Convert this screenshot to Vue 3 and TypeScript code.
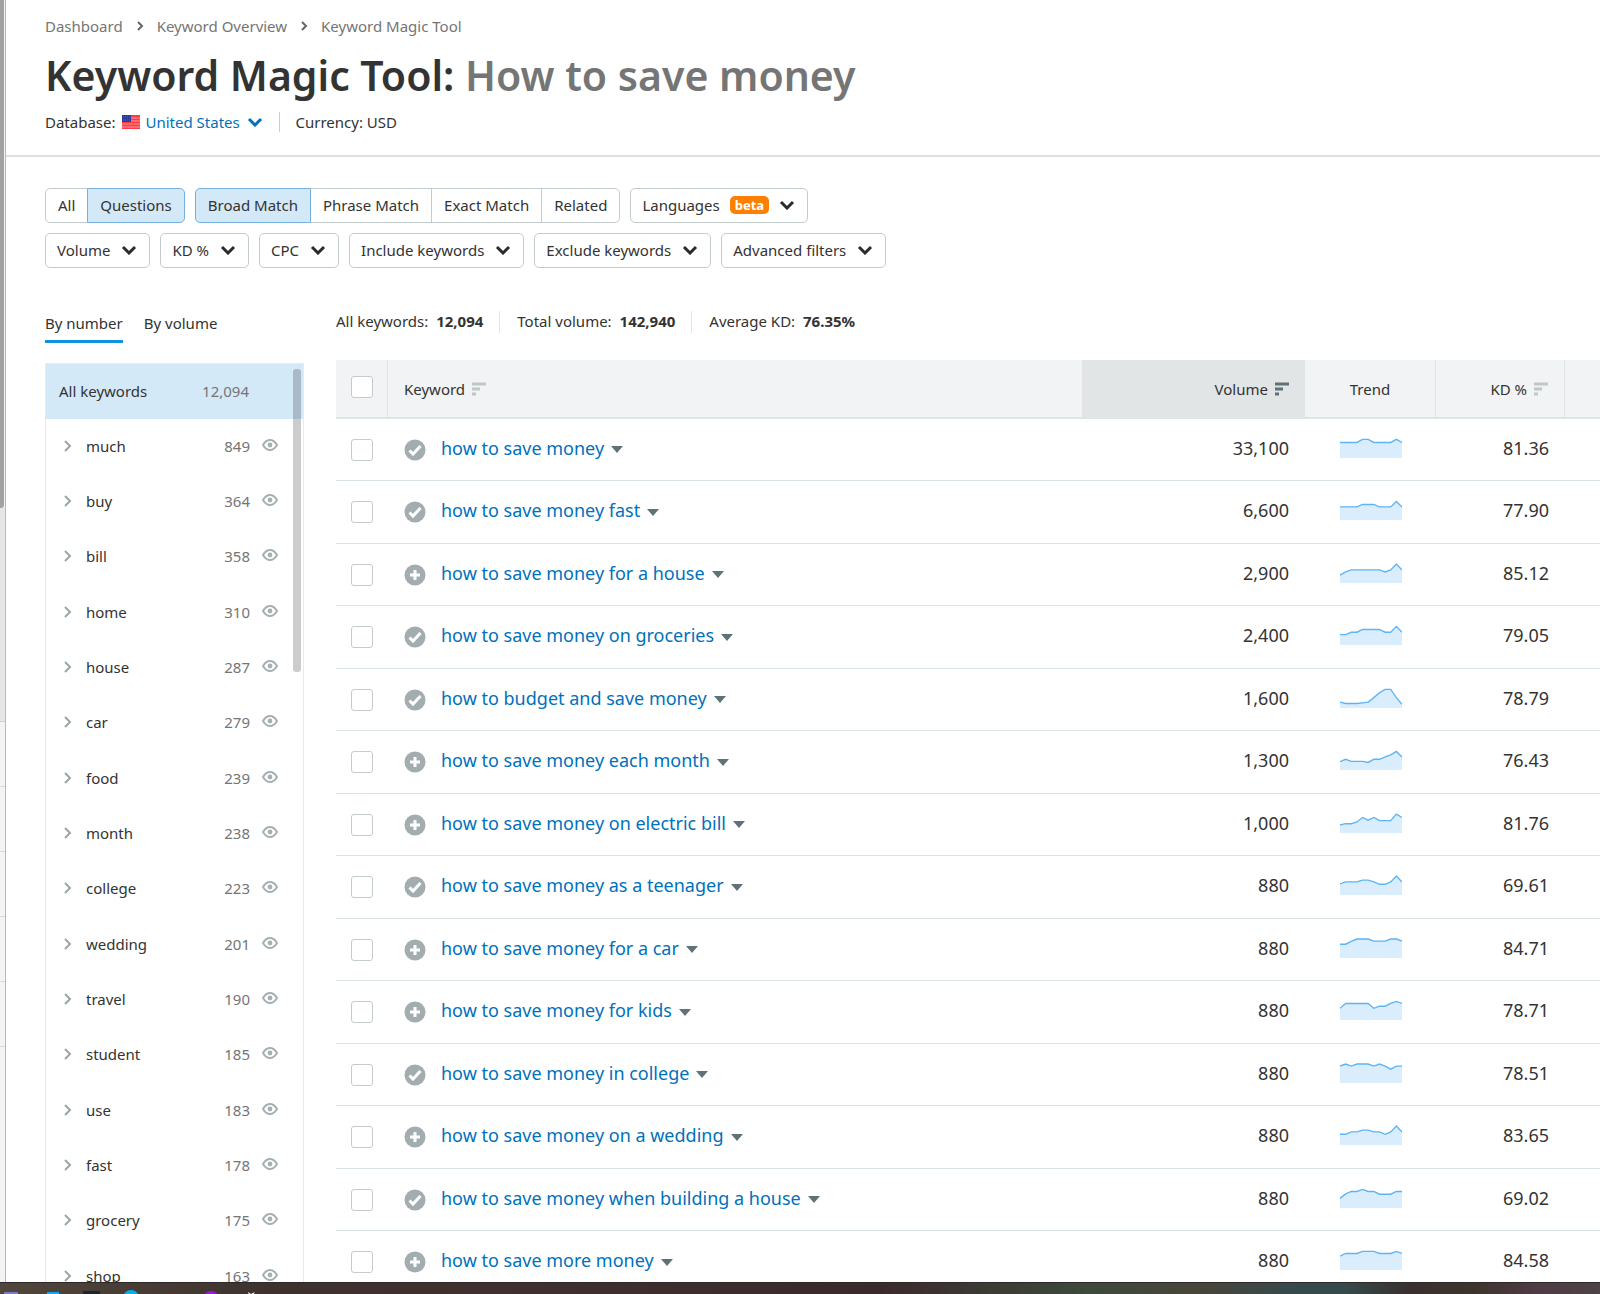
<script setup lang="ts">
import { computed, ref } from 'vue'

interface Group { name: string; count: string }
interface Keyword { text: string; added: boolean; volume: string; kd: string; trend: number[] }

const matchModes = ['Broad Match', 'Phrase Match', 'Exact Match', 'Related']
const scopes = ['All', 'Questions']
const menus = ['Volume', 'KD %', 'CPC', 'Include keywords', 'Exclude keywords', 'Advanced filters']
const match = ref('Broad Match')
const scope = ref('Questions')
const grouping = ref('By number')
const database = ref('us')

const groups: Group[] = [
  { name: 'much', count: '849' },
  { name: 'buy', count: '364' },
  { name: 'bill', count: '358' },
  { name: 'home', count: '310' },
  { name: 'house', count: '287' },
  { name: 'car', count: '279' },
  { name: 'food', count: '239' },
  { name: 'month', count: '238' },
  { name: 'college', count: '223' },
  { name: 'wedding', count: '201' },
  { name: 'travel', count: '190' },
  { name: 'student', count: '185' },
  { name: 'use', count: '183' },
  { name: 'fast', count: '178' },
  { name: 'grocery', count: '175' },
  { name: 'shop', count: '163' },
]

const keywords: Keyword[] = [
  { text: 'how to save money', added: true, volume: '33,100', kd: '81.36', trend: [45, 45, 45, 45, 54, 54, 45, 45, 45, 45, 54, 45] },
  { text: 'how to save money fast', added: true, volume: '6,600', kd: '77.90', trend: [38, 38, 38, 38, 45, 45, 45, 38, 38, 38, 54, 38] },
  { text: 'how to save money for a house', added: false, volume: '2,900', kd: '85.12', trend: [23, 32, 38, 38, 38, 38, 38, 38, 32, 38, 55, 38] },
  { text: 'how to save money on groceries', added: true, volume: '2,400', kd: '79.05', trend: [30, 30, 37, 37, 45, 45, 45, 45, 37, 37, 54, 37] },
  { text: 'how to budget and save money', added: true, volume: '1,600', kd: '78.79', trend: [17, 13, 13, 13, 15, 17, 30, 44, 54, 54, 30, 11] },
  { text: 'how to save money each month', added: false, volume: '1,300', kd: '76.43', trend: [24, 31, 25, 25, 25, 22, 31, 31, 38, 44, 54, 38] },
  { text: 'how to save money on electric bill', added: false, volume: '1,000', kd: '81.76', trend: [23, 27, 27, 32, 45, 37, 45, 36, 36, 36, 55, 45] },
  { text: 'how to save money as a teenager', added: true, volume: '880', kd: '69.61', trend: [32, 38, 38, 38, 43, 43, 38, 31, 31, 38, 55, 38] },
  { text: 'how to save money for a car', added: false, volume: '880', kd: '84.71', trend: [40, 40, 48, 55, 55, 55, 49, 49, 49, 55, 55, 49] },
  { text: 'how to save money for kids', added: false, volume: '880', kd: '78.71', trend: [34, 48, 48, 48, 48, 48, 34, 40, 40, 48, 54, 48] },
  { text: 'how to save money in college', added: true, volume: '880', kd: '78.51', trend: [49, 55, 49, 55, 55, 55, 49, 55, 49, 40, 49, 49] },
  { text: 'how to save money on a wedding', added: false, volume: '880', kd: '83.65', trend: [31, 31, 38, 38, 43, 43, 38, 38, 31, 38, 55, 38] },
  { text: 'how to save money when building a house', added: true, volume: '880', kd: '69.02', trend: [28, 41, 48, 48, 54, 48, 48, 40, 40, 40, 48, 48] },
  { text: 'how to save more money', added: false, volume: '880', kd: '84.58', trend: [40, 48, 48, 48, 54, 54, 54, 48, 48, 48, 54, 48] },
]

// Sparklines are drawn on a 186 by 58 grid, one point a month.
const rows = computed(() =>
  keywords.map((k) => {
    const line = k.trend.map((v, i) => `${((i * 186) / 11).toFixed(1)},${58 - v}`).join(' ')
    return { ...k, line, area: `0,58 ${line} 186,58` }
  }),
)
</script>

<template>
  <div class="screen">
    <div class="workspace">
      <div class="behind" aria-hidden="true">
        <div class="behind-thumb"></div>
        <div class="behind-panel"></div>
        <div v-for="n in 5" :key="n" class="behind-row"></div>
      </div>

      <div class="page">
        <header class="top">
          <nav class="crumbs" aria-label="Breadcrumb">
            <a href="#">Dashboard</a>
            <svg width="8" height="12" viewBox="0 0 8 12"><path d="M2 2l4 4-4 4" /></svg>
            <a href="#">Keyword Overview</a>
            <svg width="8" height="12" viewBox="0 0 8 12"><path d="M2 2l4 4-4 4" /></svg>
            <a href="#">Keyword Magic Tool</a>
          </nav>
          <h1>Keyword Magic Tool: <span>How to save money</span></h1>
          <div class="settings">
            <label for="database">Database:</label>
            <svg class="flag" width="18" height="14" viewBox="0 0 18 14">
              <rect width="18" height="14" fill="#ff3b41" />
              <path d="M0 3h18M0 6h18M0 9h18M0 12h18" stroke="#ff9a9c" stroke-width="1" />
              <rect width="9" height="7" fill="#2a3a9c" />
              <path d="M1 2h7M1 5h7" stroke="#5a68b8" stroke-dasharray="1 1" />
            </svg>
            <select id="database" v-model="database">
              <option value="us">United States</option>
            </select>
            <svg class="chev blue" width="16" height="10" viewBox="0 0 16 10"><path d="M2 2l6 6 6-6" /></svg>
            <span class="currency">Currency: <span>USD</span></span>
          </div>
        </header>

        <section class="filters" aria-label="Filters">
          <div class="filter-row">
            <div class="group">
              <button v-for="s in scopes" :key="s" type="button" :class="{ on: scope === s }" @click="scope = s">{{ s }}</button>
            </div>
            <div class="group">
              <button v-for="m in matchModes" :key="m" type="button" :class="{ on: match === m }" @click="match = m">{{ m }}</button>
            </div>
            <button type="button" class="menu languages" aria-haspopup="true">
              Languages <span class="beta">beta</span>
              <svg class="chev" width="16" height="10" viewBox="0 0 16 10"><path d="M2 2l6 6 6-6" /></svg>
            </button>
          </div>
          <div class="filter-row">
            <button v-for="m in menus" :key="m" type="button" class="menu" aria-haspopup="true">
              {{ m }}
              <svg class="chev" width="16" height="10" viewBox="0 0 16 10"><path d="M2 2l6 6 6-6" /></svg>
            </button>
          </div>
        </section>

        <div class="body">
          <aside class="side">
            <div class="tabs">
              <button v-for="t in ['By number', 'By volume']" :key="t" type="button" :class="{ active: grouping === t }" @click="grouping = t">{{ t }}</button>
            </div>
            <div class="list">
              <button type="button" class="all"><span>All keywords</span><span class="count">12,094</span></button>
              <ul>
                <li v-for="g in groups" :key="g.name">
                  <button type="button" class="item">
                    <svg width="8" height="12" viewBox="0 0 8 12"><path d="M1 1l5 5-5 5" /></svg>
                    <span class="name">{{ g.name }}</span>
                    <span class="count">{{ g.count }}</span>
                  </button>
                  <button type="button" class="eye" :aria-label="'Exclude ' + g.name">
                    <svg width="16" height="12" viewBox="0 0 16 12">
                      <path d="M1 6Q4 1 8 1t7 5q-3 5-7 5T1 6z" />
                      <circle cx="8" cy="6" r="2.4" />
                    </svg>
                  </button>
                </li>
              </ul>
              <div class="thumb"></div>
            </div>
          </aside>

          <main class="results">
            <div class="stats">
              <span>All keywords: <b>12,094</b></span>
              <span>Total volume: <b>142,940</b></span>
              <span>Average KD: <b>76.35%</b></span>
            </div>
            <table>
              <colgroup>
                <col class="c-tick" /><col /><col class="c-volume" /><col class="c-trend" /><col class="c-kd" /><col class="c-rest" />
              </colgroup>
              <thead>
                <tr>
                  <th class="tick"><input type="checkbox" aria-label="Select all keywords" /></th>
                  <th class="kw">
                    <button type="button" class="sort">Keyword
                      <svg width="14" height="14" viewBox="0 0 14 14"><path d="M0 2h14M0 7h8M0 12h4" /></svg>
                    </button>
                  </th>
                  <th class="num sorted">
                    <button type="button" class="sort">Volume
                      <svg width="14" height="14" viewBox="0 0 14 14"><path d="M0 2h14M0 7h8M0 12h4" /></svg>
                    </button>
                  </th>
                  <th class="trend">Trend</th>
                  <th class="num kd">
                    <button type="button" class="sort">KD %
                      <svg width="14" height="14" viewBox="0 0 14 14"><path d="M0 2h14M0 7h8M0 12h4" /></svg>
                    </button>
                  </th>
                  <th></th>
                </tr>
              </thead>
              <tbody>
                <tr v-for="r in rows" :key="r.text">
                  <td class="tick"><input type="checkbox" :aria-label="'Select ' + r.text" /></td>
                  <td class="kw">
                    <div class="kw-cell">
                      <svg class="mark" width="22" height="22" viewBox="0 0 22 22">
                        <circle cx="11" cy="11" r="10.5" />
                        <path v-if="r.added" d="M5.5 11.5l3.5 3.5 7.5-8" />
                        <path v-else d="M11 6v10M6 11h10" />
                      </svg>
                      <a href="#">{{ r.text }}</a>
                      <svg class="caret" width="12" height="7" viewBox="0 0 12 7"><path d="M0 0h12L6 7z" /></svg>
                    </div>
                  </td>
                  <td class="num">{{ r.volume }}</td>
                  <td class="trend">
                    <svg width="62" height="20" viewBox="0 0 186 58" preserveAspectRatio="none">
                      <polygon :points="r.area" />
                      <polyline :points="r.line" />
                    </svg>
                  </td>
                  <td class="num">{{ r.kd }}</td>
                  <td></td>
                </tr>
              </tbody>
            </table>
          </main>
        </div>
      </div>
    </div>

    <footer class="taskbar" aria-hidden="true">
      <svg width="260" height="12" viewBox="0 0 260 12">
        <rect x="4" y="9" width="14" height="6" rx="1" fill="#7d7cc4" />
        <path d="M43 12v-1h4V9h12v3z" fill="#18a4f0" />
        <path d="M43 11h8v1h-8z" fill="#0a62b0" />
        <rect x="83" y="8" width="17" height="6" rx="1" fill="#1e252c" />
        <circle cx="131" cy="15" r="8" fill="#06aef0" />
        <path d="M165 10l4 1 6-1-2 2h-6z" fill="#7c2020" />
        <circle cx="211" cy="16" r="8" fill="#a512e0" />
        <path d="M248 9l3 2 4-2-2 3h-4z" fill="#fff" />
      </svg>
    </footer>
  </div>
</template>

<style>
html,
body {
  margin: 0;
  background: #fff;
}
</style>

<style scoped>
.screen {
  display: flex;
  flex-direction: column;
  height: 100vh;
  overflow: hidden;
  font-family: 'Noto Sans', 'Open Sans', sans-serif;
  font-size: 15px;
  line-height: 20px;
  color: #333;
}
.screen * {
  box-sizing: border-box;
}
button,
select {
  margin: 0;
  padding: 0;
  border: 0;
  background: none;
  font: inherit;
  color: inherit;
  cursor: pointer;
}
a {
  color: inherit;
  text-decoration: none;
}
svg {
  display: block;
  flex: none;
}
.workspace {
  flex: 1;
  display: flex;
  min-height: 0;
}

/* edge of the window behind this one */
.behind {
  flex: none;
  width: 6px;
  background: #f3f3f3;
  border-right: 1px solid #b8b8b8;
}
.behind-thumb {
  height: 508px;
  width: 4px;
  background: #a2a2a2;
  border-bottom-right-radius: 3px;
}
.behind-panel {
  height: 214px;
  background: #e6e6e6;
  border-bottom: 1px solid #d0d0d0;
}
.behind-row {
  height: 65px;
  border-bottom: 1px solid #d8d8d8;
}

.page {
  flex: 1;
  min-width: 0;
  overflow: hidden;
}
.top {
  padding: 16px 39px 23px;
  border-bottom: 2px solid #dcdfdf;
}
.crumbs {
  display: flex;
  align-items: center;
  gap: 13px;
  color: #757575;
}
.crumbs path {
  fill: none;
  stroke: #666;
  stroke-width: 2;
}
h1 {
  margin: 10px 0 0;
  font-size: 41px;
  line-height: 58px;
  font-weight: 600;
}
h1 span {
  color: #757575;
}
.settings {
  display: flex;
  align-items: center;
  gap: 6px;
  margin-top: 8px;
}
.settings select {
  appearance: none;
  color: #0071bc;
}
.currency {
  margin-left: 10px;
  padding-left: 16px;
  border-left: 1px solid #c8cccd;
}
.chev path {
  fill: none;
  stroke: #2b2b2b;
  stroke-width: 3;
}
.chev.blue path {
  stroke: #0071bc;
}

.filters {
  display: flex;
  flex-direction: column;
  gap: 10px;
  padding: 31px 39px 0;
}
.filter-row {
  display: flex;
  gap: 10px;
}
.group {
  display: flex;
}
.group button,
.menu {
  height: 35px;
  padding: 0 12px 1px;
  border: 1px solid #c4cbcc;
}
.group button + button {
  margin-left: -1px;
}
.group button:first-child {
  border-radius: 5px 0 0 5px;
}
.group button:last-child {
  border-radius: 0 5px 5px 0;
}
.group .on {
  position: relative;
  background: #d4e9f8;
  border-color: #74b0e0;
}
.menu {
  display: flex;
  align-items: center;
  gap: 11px;
  padding: 0 12px 1px 11px;
  border-radius: 5px;
}
.languages {
  gap: 10px;
}
.beta {
  padding: 0 5px;
  border-radius: 5px;
  background: #ff8000;
  color: #fff;
  font-size: 13px;
  line-height: 18px;
  font-weight: 700;
}

.body {
  display: flex;
  align-items: flex-start;
  gap: 32px;
  padding: 43px 0 0 39px;
}
.side {
  flex: none;
  width: 259px;
}
.tabs {
  display: flex;
  gap: 21px;
  margin-bottom: 20px;
}
.tabs button {
  padding: 2px 0 7px;
  border-bottom: 3px solid transparent;
}
.tabs .active {
  border-bottom-color: #0f91e4;
}
.list {
  position: relative;
  border: 1px solid #e8ebec;
}
.all {
  display: flex;
  justify-content: space-between;
  align-items: center;
  width: 100%;
  height: 55px;
  padding: 0 54px 1px 13px;
  background: #d4e9f8;
}
.count {
  color: #757575;
}
ul {
  margin: 0;
  padding: 0;
  list-style: none;
}
li {
  display: flex;
  align-items: center;
  gap: 12px;
  height: 55px;
  padding: 0 25px 2px 18px;
}
li:nth-child(3n) {
  height: 56px;
}
.item {
  flex: 1;
  display: flex;
  align-items: center;
  text-align: left;
}
.name {
  flex: 1;
  padding-left: 14px;
}
.item path {
  fill: none;
  stroke: #9aa5a7;
  stroke-width: 2;
}
.eye {
  padding-bottom: 2px;
}
.eye path {
  fill: none;
  stroke: #a6b0b3;
  stroke-width: 2;
}
.eye circle {
  fill: #a6b0b3;
}
.thumb {
  position: absolute;
  top: 5px;
  right: 2px;
  width: 8px;
  height: 303px;
  border-radius: 3px;
  background: rgba(0, 0, 0, 0.2);
}

.results {
  flex: 1;
  min-width: 0;
}
.stats {
  display: flex;
  height: 49px;
}
.stats span {
  height: 22px;
}
.stats span + span {
  margin-left: 16px;
  padding-left: 17px;
  border-left: 1px solid #e0e4e5;
}
b {
  font-weight: 700;
  margin-left: 4px;
}

table {
  width: 100%;
  table-layout: fixed;
  border-collapse: separate;
  border-spacing: 0;
}
.c-tick {
  width: 52px;
}
.c-volume {
  width: 223px;
}
.c-trend {
  width: 131px;
}
.c-kd {
  width: 129px;
}
.c-rest {
  width: 35px;
}
th {
  height: 59px;
  padding: 0 16px;
  background: #f1f3f4;
  border-bottom: 2px solid #dfe4e6;
  font-weight: 400;
}
td {
  height: 62px;
  padding: 0 16px;
  border-bottom: 1px solid #dbe2e3;
  font-size: 18px;
  line-height: 24px;
}
tr:nth-child(even) td {
  height: 63px;
}
th.tick,
th.trend,
th.kd {
  border-right: 1px solid #dfe4e6;
}
.sorted {
  background: #e1e5e6;
}
.tick {
  padding-left: 15px;
  text-align: left;
}
th.tick {
  padding-bottom: 3px;
}
.tick input {
  display: block;
  appearance: none;
  width: 22px;
  height: 22px;
  margin: 0;
  border: 1px solid #c4cbcc;
  border-radius: 3px;
  background: #fff;
}
.kw {
  text-align: left;
}
.num {
  text-align: right;
}
.trend {
  text-align: center;
}
td.num,
td.trend {
  padding-bottom: 4px;
}
.sort {
  display: inline-flex;
  align-items: center;
  gap: 7px;
}
.sort path {
  stroke: #bfc7c7;
  stroke-width: 3;
}
.sorted path {
  stroke: #5f7377;
}
.kw-cell {
  display: flex;
  align-items: center;
}
.mark {
  margin-right: 15px;
}
.mark circle {
  fill: #a3adb0;
}
.mark path {
  fill: none;
  stroke: #fff;
  stroke-width: 3;
}
.kw-cell a {
  padding-bottom: 4px;
  color: #0071bc;
}
.caret {
  margin-left: 7px;
  fill: #5f7377;
}
td.trend svg {
  margin: 0 auto;
}
td polygon {
  fill: #daedfc;
}
td polyline {
  fill: none;
  stroke: #5db4f5;
  stroke-width: 4;
}

.taskbar {
  flex: none;
  height: 12px;
  border-top: 1px solid #2c2928;
  background: linear-gradient(90deg, #51463b, #3d312e 18%, #40302f 30%, #3b2a2c 55%, #3d4a3c 68%, #48453a 75%, #364a4c 81%, #354a4b 84%, #3a3030 88%, #3b352b 92%, #503a46 96%, #4c4446);
}
</style>
